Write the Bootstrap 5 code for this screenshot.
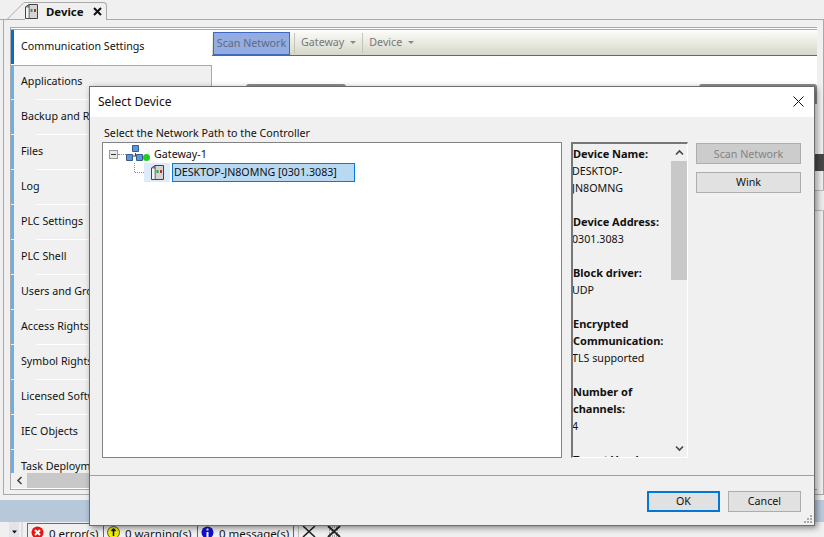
<!DOCTYPE html>
<html lang="en">
<head>
<meta charset="utf-8">
<title>Device</title>
<link href="https://cdn.jsdelivr.net/npm/bootstrap@5.3.0/dist/css/bootstrap.min.css" rel="stylesheet">
<style>
html,body{width:824px;height:537px;overflow:hidden}
body{position:relative;background:#f0f0f0;font-family:"Noto Sans",sans-serif;font-size:10.7px;line-height:17px;color:#111}
.ide{height:537px}
.tabstrip{height:20px;border-bottom:1px solid #a9a9a9;padding:2px 0 0 7px}
.slant{flex:none;display:block}
.devtab{width:82px;height:18px;background:#f0f0f0;border:1px solid #a9a9a9;border-left:0;border-bottom:0;border-radius:0 4px 0 0;font-weight:700;font-size:11.4px;margin-bottom:-1px}
.devtab .tabname{margin-left:8px}
.devtab .tabx{margin-left:9px}
.workzone{height:475px;margin-left:3px;border:1px solid #a9a9a9;border-top:0;padding:7px 6px 0 6px}
.editor{height:463px;background:#fff;border-top:3px double #a9a9a9;border-left:1px solid #a9a9a9;border-bottom:1px solid #a9a9a9}
.editmain{height:443px;overflow:hidden}
.sidelist{width:201px;flex:none}
.sideitem{height:35px;padding-left:10px;background:linear-gradient(#66b0f2,#66b0f2) left top/3px 34px no-repeat #f0f0f0;line-height:32px;white-space:nowrap;overflow:hidden;position:relative}
.sideitem::after{content:"";position:absolute;left:25px;right:0;bottom:0;height:1px;background:#fff}
.sideitem.current{background:linear-gradient(#0a6cc4,#0a6cc4) left top/3px 34px no-repeat #fff}
.sideitem.current::after{display:none}
.sideitem.below{box-shadow:inset 0 1px #a9a9a9,inset -1px 0 #a9a9a9}
.rightpane{min-width:0}
.toolbelt{height:26px;padding-top:1px;background:linear-gradient(#fdfdfb,#d6d7c8);border-bottom:1px solid #666;color:#777}
.scanflat{height:23px;width:77px;margin-left:1px;background:#94ace0;border:1px solid #3f68c0;text-align:center;line-height:20px;color:#5c6a86}
.dropflat{padding:0 2px 0 6px;border-left:1px solid #c4c4b8;height:20px;line-height:19px;margin-left:4px}
.caretmini{display:inline-block;border:3px solid transparent;border-top-color:#888;border-bottom:0;margin-left:6px;vertical-align:2px}
.hscroll{height:15px;background:#c8c8c8;width:66px}
.hleft{width:16px;height:15px;background:#efefef}
.blueband{height:22px;background:linear-gradient(90deg,#b6c8da,#bccbdc);margin-top:5px}
.statusrow{height:15px;padding-left:9px;overflow:hidden}
.arrowcell{width:10px;background:#e3e3ea;margin-right:2px}
.gripline{width:2px;background:#dedede;margin-right:4px}
.msgcell{height:15px;margin-top:1px;border:1px solid #4a6cb0;border-bottom:0;border-right:0;padding:2px 0 0 3px;gap:5px;font-size:11.5px;line-height:16px;white-space:nowrap;flex:none}
.wcell1{width:76px}.wcell2{width:94px}.wcell3{width:97px;border-right:1px solid #4a6cb0}
.statsep{width:1px;background:#bbb;margin:1px 3px 0 4px}
.statbtn{margin:4px 11px 0 0;flex:none}
.dlg{position:absolute;left:89px;top:86px;width:726px;height:440px;background:#f0f0f0;border:1px solid #6d6d6d;box-shadow:2px 2px 6px rgba(0,0,0,.45);z-index:5}
.dlghead{height:30px;background:#fff;padding:0 10px 2px 8px;font-size:12px}
.dlgbody{height:359px;padding:8px 12px 0 12px;border-bottom:1px solid #a0a0a0}
.pathlabel{height:17px;line-height:17px;padding-left:2px}
.treebox{width:460px;height:316px;background:#fff;border:1px solid #828282;padding:2px 0 0 6px;flex:none}
.treerow{height:18px;white-space:nowrap}
.treesel{background:#b9d8f2;border:1px solid #0a78d7;height:19px;line-height:17px;width:183px;padding-left:1px;margin-left:2px;flex:none}
.iconcell{background:#dcecfa;width:26px;height:19px;flex:none}
.expander{width:9px;height:9px;border:1px solid #999;background:#e8e8e8;flex:none;position:relative}
.expander::after{content:"";position:absolute;left:1px;right:1px;top:3px;height:1px;background:#333}
.dots{border-top:1px dotted #888;width:8px;flex:none}
.gatename{margin-left:4px}
.infobox{width:117px;height:316px;margin-left:9px;border:1px solid #fff;border-top:2px solid #777;border-left:2px solid #777;overflow:hidden;flex:none}
.infotext{width:98px;margin-left:-1px;padding-top:1px;line-height:17px;height:313px;overflow:hidden;color:#111;font-size:10.7px}
.infotext b{display:block;font-weight:700;font-size:11px;padding-left:1px;margin-bottom:1px}
.infotext p{margin:0 0 16px}
.vbar{width:16px;flex:none;height:313px;margin-left:2px}
.vgrip{height:119px;background:#c8c8c8}
.varrow{height:17px;flex:none}
.sidebtns{width:105px;margin:1px 0 0 8px;gap:8px;flex:none}
.winbtn{height:21px;background:#e1e1e1;border:1px solid #adadad;text-align:center;line-height:19px;color:#111}
.winbtn.off{background:#ccc;color:#838383;line-height:20px}
.dlgfoot{height:49px;padding:15px 13px 0 0;gap:8px;justify-content:flex-end}
.footbtn{width:73px;height:21px}
.footbtn.primary{border:2px solid #0078d7;line-height:17px}
.grip{position:absolute;right:2px;bottom:2px}
.peek{position:absolute;background:#8c8c8c}
.peek1{left:246px;top:84px;width:100px;height:4px;border-radius:3px 3px 0 0}
.peek2{left:699px;top:84px;width:118px;height:20px;border-radius:3px 3px 0 0}
.peek3{left:812px;top:154px;width:12px;height:17px;background:#484848;border-radius:4px 0 0 4px}
.peek4{left:812px;top:190px;width:12px;height:21px;background:#ececec;border-top:1px solid #bbb;border-bottom:1px solid #bbb}
</style>
</head>
<body>
<div class="ide d-flex flex-column">
  <div class="tabstrip d-flex">
    <svg class="slant" width="18" height="18" viewBox="0 0 18 18"><path d="M0 17.5 17 .5h1" fill="none" stroke="#a9a9a9"/></svg>
    <div class="devtab d-flex align-items-center">
      <svg width="13" height="15" viewBox="0 0 13 15"><path d="M.5 3 4 .5h8.5v14H.5z" fill="#d4d4d4" stroke="#444"/><path d="M.5 3H4v11.500M4 3 4 .5" fill="none" stroke="#444"/><path d="M1 3.500h2.500V14H1z" fill="#f4f4f4"/><rect x="5.500" y="5" width="2" height="3" fill="#1faa3c"/><rect x="9" y="5" width="2" height="3" fill="#c92a2a"/></svg>
      <span class="tabname">Device</span>
      <svg class="tabx" width="9" height="9" viewBox="0 0 9 9"><path d="M1 1l7 7M8 1 1 8" stroke="#111" stroke-width="2"/></svg>
    </div>
  </div>
  <div class="workzone">
    <div class="editor">
      <div class="editmain d-flex">
        <div class="sidelist">
          <div class="sideitem current">Communication Settings</div>
          <div class="sideitem below">Applications</div>
          <div class="sideitem">Backup and Restore</div>
          <div class="sideitem">Files</div>
          <div class="sideitem">Log</div>
          <div class="sideitem">PLC Settings</div>
          <div class="sideitem">PLC Shell</div>
          <div class="sideitem">Users and Groups</div>
          <div class="sideitem">Access Rights</div>
          <div class="sideitem">Symbol Rights</div>
          <div class="sideitem">Licensed Software</div>
          <div class="sideitem">IEC Objects</div>
          <div class="sideitem">Task Deployment</div>
        </div>
        <div class="rightpane flex-grow-1">
          <div class="toolbelt d-flex align-items-center">
            <div class="scanflat">Scan Network</div>
            <div class="dropflat">Gateway<span class="caretmini"></span></div>
            <div class="dropflat">Device<span class="caretmini"></span></div>
          </div>
        </div>
      </div>
      <div class="d-flex">
        <div class="hleft d-flex align-items-center justify-content-center"><svg width="7" height="9" viewBox="0 0 7 9"><path d="M5.500 1 2 4.500 5.500 8" fill="none" stroke="#444" stroke-width="1.600"/></svg></div>
        <div class="hscroll"></div>
      </div>
    </div>
  </div>
  <div class="blueband"></div>
  <div class="statusrow d-flex">
    <div class="arrowcell d-flex align-items-end justify-content-center"><svg width="7" height="8" viewBox="0 0 7 8"><path d="M1 1.500h5L3.500 4.500z" fill="#111"/></svg></div>
    <div class="gripline"></div>
    <div class="msgcell wcell1 d-flex"><svg class="flex-none" width="13" height="13" viewBox="0 0 13 13"><circle cx="6.500" cy="6.500" r="6" fill="#e11"/><path d="M4 4l5 5M9 4 4 9" stroke="#fff" stroke-width="2"/></svg><span>0 error(s)</span></div>
    <div class="msgcell wcell2 d-flex"><svg width="13" height="13" viewBox="0 0 13 13"><circle cx="6.500" cy="6.500" r="6" fill="#ee0" stroke="#555"/><path d="M6.500 3v7M4.500 5l2-2 2 2" fill="none" stroke="#111" stroke-width="1.500"/></svg><span>0 warning(s)</span></div>
    <div class="msgcell wcell3 d-flex"><svg width="13" height="13" viewBox="0 0 13 13"><circle cx="6.500" cy="6.500" r="6" fill="#11c"/><path d="M6.500 2.500v2M6.500 6v5" stroke="#fff" stroke-width="2"/></svg><span>0 message(s)</span></div>
    <div class="statsep"></div>
    <svg class="statbtn" width="14" height="11" viewBox="0 0 14 11"><path d="M1 0l12 11M13 0 1 11" stroke="#222" stroke-width="1.600"/></svg>
    <svg class="statbtn" width="14" height="11" viewBox="0 0 14 11"><path d="M1 0l12 11M13 0 1 11" stroke="#222" stroke-width="2"/><path d="M3 1h8M2 4h10M2 7h10M3 10h8" stroke="#555" stroke-dasharray="1 1"/></svg>
  </div>
</div>

<div class="peek peek1"></div>
<div class="peek peek2"></div>
<div class="peek peek3"></div>
<div class="peek peek4"></div>

<div class="dlg">
  <div class="dlghead d-flex align-items-center justify-content-between">
    <span>Select Device</span>
    <svg width="11" height="11" viewBox="0 0 11 11"><path d="M.5.5l10 10M10.500.5l-10 10" stroke="#111"/></svg>
  </div>
  <div class="dlgbody">
    <div class="pathlabel">Select the Network Path to the Controller</div>
    <div class="d-flex">
      <div class="treebox">
        <div class="treerow d-flex align-items-center">
          <span class="expander"></span><span class="dots"></span>
          <svg width="24" height="18" viewBox="0 0 24 18"><path d="M9.500 8v3M3.500 11h11" stroke="#444"/><path d="M6.500.5h6v6h-6zM.5 9.500h6v6h-6zM10.500 9.500h6v6h-6z" fill="#5b97de" stroke="#3a5a88"/><circle cx="20.500" cy="12.500" r="3.500" fill="#1ad01a"/></svg>
          <span class="gatename">Gateway-1</span>
        </div>
        <div class="treerow d-flex align-items-center">
          <svg width="35" height="18" viewBox="0 0 35 18" class="slant"><path d="M25.500 0v9.500H35" fill="none" stroke="#888" stroke-dasharray="1 1"/></svg>
          <span class="iconcell d-flex align-items-center justify-content-center"><svg width="13" height="15" viewBox="0 0 13 15"><path d="M.5 3 4 .5h8.500v14H.5z" fill="#d4d4d4" stroke="#444"/><path d="M.5 3H4v11.500M4 3 4 .5" fill="none" stroke="#444"/><path d="M1 3.500h2.500V14H1z" fill="#f4f4f4"/><rect x="5.500" y="5" width="2" height="3" fill="#1faa3c"/><rect x="9" y="5" width="2" height="3" fill="#c92a2a"/></svg></span>
          <span class="treesel">DESKTOP-JN8OMNG [0301.3083]</span>
        </div>
      </div>
      <div class="infobox d-flex">
        <div class="infotext">
          <p><b>Device Name:</b>DESKTOP-<br>JN8OMNG</p>
          <p><b>Device Address:</b>0301.3083</p>
          <p><b>Block driver:</b>UDP</p>
          <p><b>Encrypted Communication:</b>TLS supported</p>
          <p><b>Number of channels:</b>4</p>
          <p><b>Target Vendor:</b></p>
        </div>
        <div class="vbar d-flex flex-column">
          <div class="varrow d-flex align-items-center justify-content-center"><svg width="9" height="7" viewBox="0 0 9 7"><path d="M1 5.500 4.500 2 8 5.500" fill="none" stroke="#444" stroke-width="1.600"/></svg></div>
          <div class="vgrip"></div>
          <div class="flex-grow-1"></div>
          <div class="varrow d-flex align-items-center justify-content-center"><svg width="9" height="7" viewBox="0 0 9 7"><path d="M1 1.500 4.500 5 8 1.500" fill="none" stroke="#444" stroke-width="1.600"/></svg></div>
        </div>
      </div>
      <div class="sidebtns d-flex flex-column">
        <div class="winbtn off">Scan Network</div>
        <div class="winbtn">Wink</div>
      </div>
    </div>
  </div>
  <div class="dlgfoot d-flex">
    <div class="winbtn footbtn primary">OK</div>
    <div class="winbtn footbtn">Cancel</div>
  </div>
  <svg class="grip" width="8" height="8" viewBox="0 0 8 8"><path d="M6 0h2v2H6zM3 3h2v2H3zM6 3h2v2H6zM0 6h2v2H0zM3 6h2v2H3zM6 6h2v2H6z" fill="#aaa"/></svg>
</div>
</body>
</html>
